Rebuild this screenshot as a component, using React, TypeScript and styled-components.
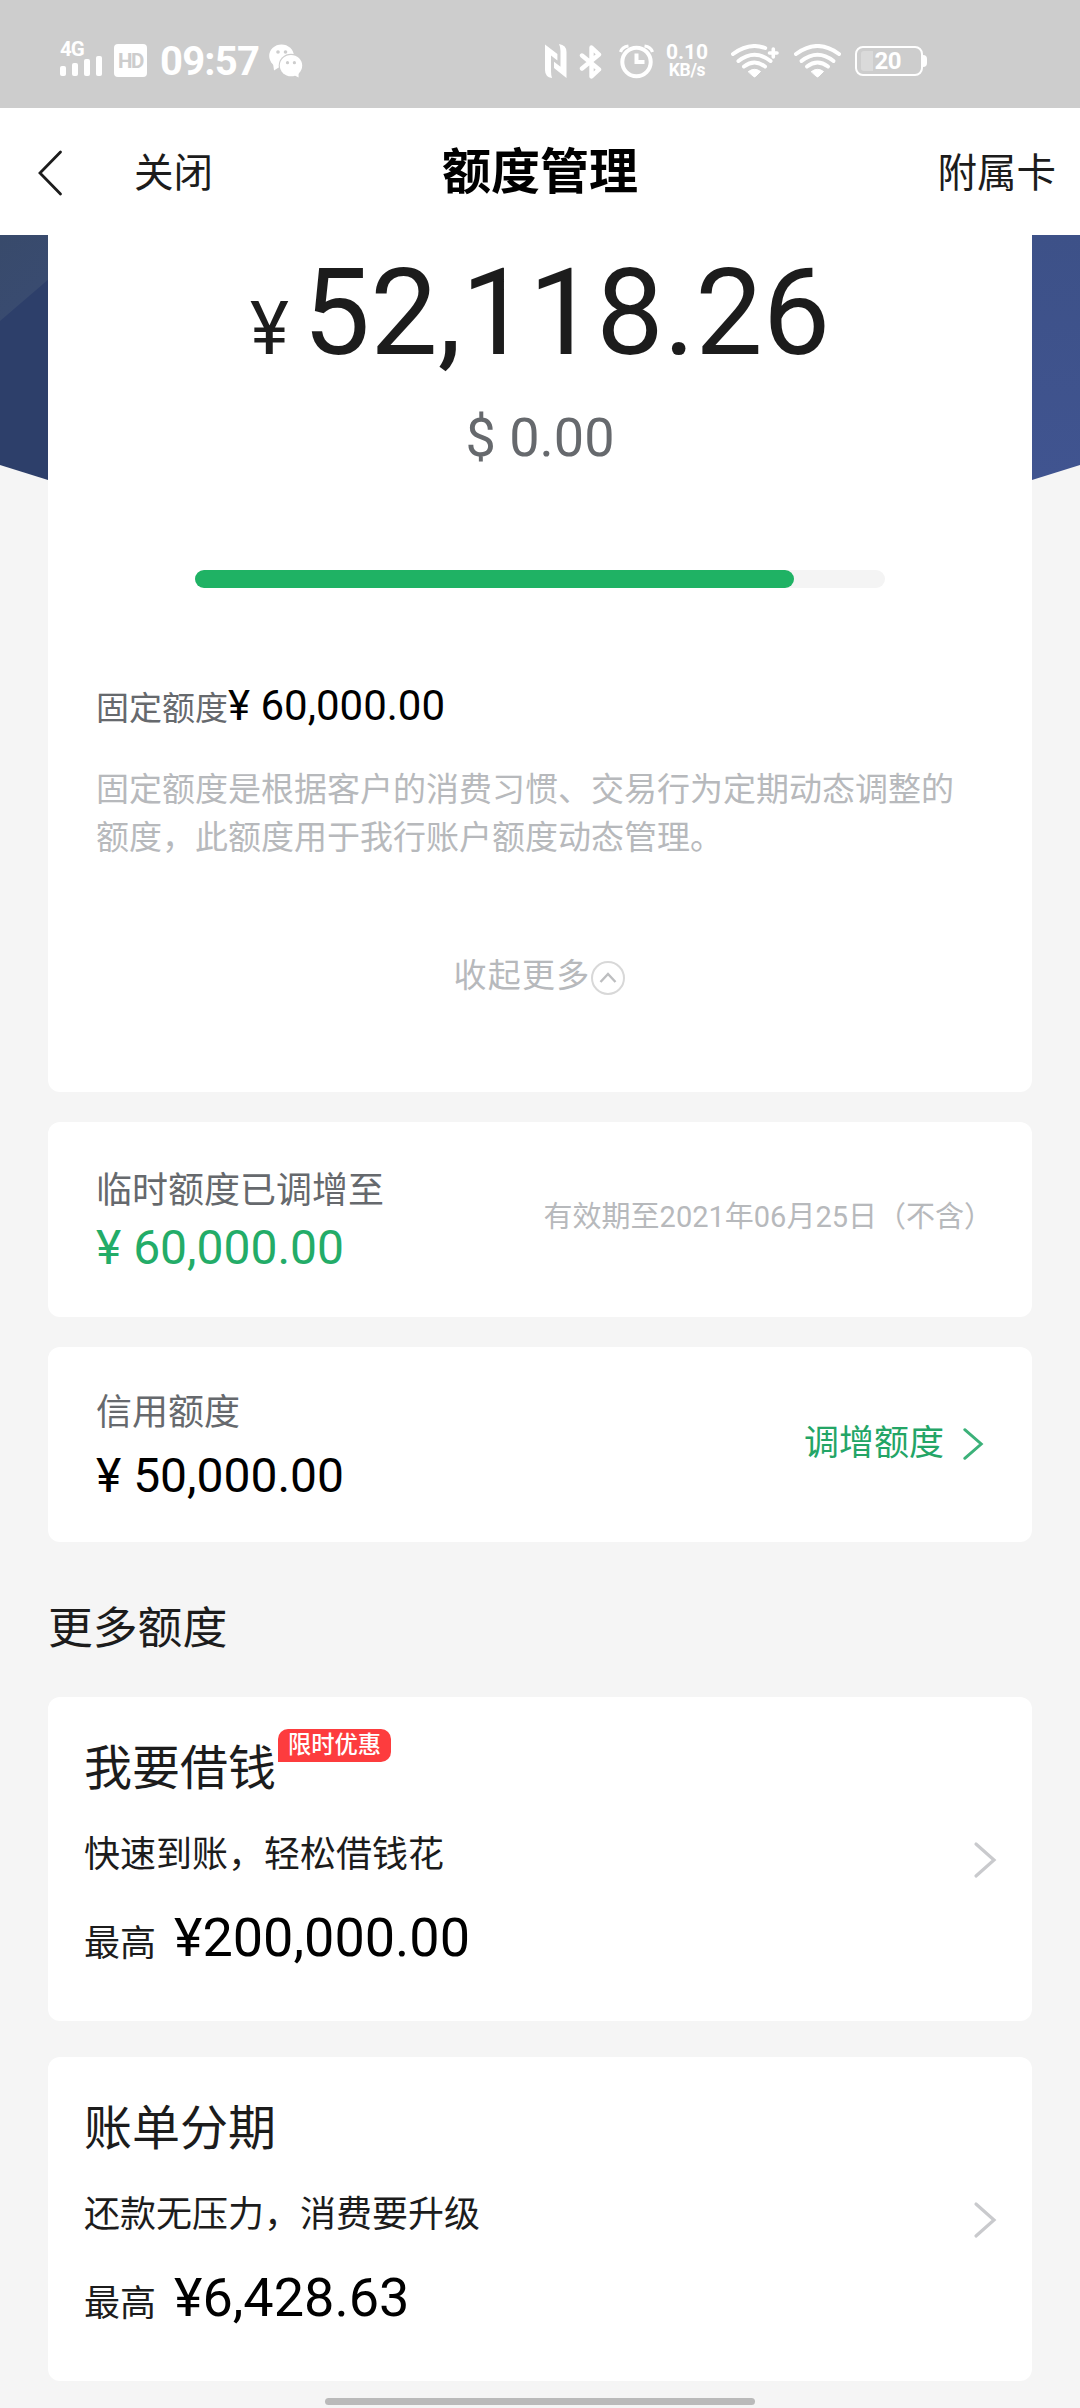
import React from "react";
import styled, { createGlobalStyle } from "styled-components";

const GlobalStyle = createGlobalStyle`
  *, *::before, *::after { box-sizing: border-box; }
  body {
    margin: 0;
    background: #f5f5f5;
    font-family: Roboto, "Noto Sans CJK SC", sans-serif;
    color: #1c1c1c;
  }
`;

const Screen = styled.div`
  width: 1080px;
  height: 2408px;
  display: flex;
  flex-direction: column;
  overflow: hidden;
  background: #f5f5f5;
`;

/* ---------- status bar ---------- */

const StatusBar = styled.header`
  height: 108px;
  flex: none;
  display: flex;
  align-items: flex-start;
  padding: 40px 153px 0 60px;
  background: #cdcdcd;
  color: #fff;
`;

const Network = styled.div`
  width: 43px;
  height: 36px;
  margin-right: 11px;
  display: flex;
  flex-direction: column;
  justify-content: space-between;
  font-size: 20.5px;
  font-weight: 700;
  line-height: 18px;
  letter-spacing: -1px;
`;

const Bars = styled.div`
  display: flex;
  align-items: flex-end;
  gap: 6px;
  height: 20px;
  margin-top: -2px;
`;

const Bar = styled.i<{ $h: number }>`
  width: 6px;
  height: ${(p) => p.$h}px;
  border-radius: 2px;
  background: #fff;
`;

const HdBadge = styled.div`
  width: 33px;
  height: 33px;
  margin: 4px 13px 0 0;
  border-radius: 4px;
  background: #fff;
  color: #cdcdcd;
  font-size: 20.5px;
  font-weight: 700;
  line-height: 34px;
  letter-spacing: -1.5px;
  text-align: center;
`;

const Clock = styled.div`
  width: 97px;
  margin-right: 12px;
  font-size: 40px;
  font-weight: 700;
  line-height: 44px;
  letter-spacing: -0.8px;
  white-space: nowrap;
`;

const StatusRight = styled.div`
  display: flex;
  margin-left: auto;
  padding-top: 4px;
`;

const Speed = styled.div`
  width: 40px;
  margin: -1px 24px 0 13px;
  display: flex;
  flex-direction: column;
  align-items: center;
  font-weight: 700;
  white-space: nowrap;
`;

const SpeedLine = styled.span<{ $size: number; $tight: number }>`
  font-size: ${(p) => p.$size}px;
  letter-spacing: ${(p) => p.$tight}px;
  line-height: 18px;
`;

const Battery = styled.div`
  width: 68px;
  height: 30px;
  margin: 2px 4px 0 14px;
  position: relative;
  border: 2px solid #fff;
  border-radius: 8px;
  display: flex;
  align-items: center;
  padding-left: 3.5px;
  font-size: 24px;
  font-weight: 700;
  line-height: 26px;
  gap: 2px;
  letter-spacing: -0.5px;

  &::before {
    content: "";
    width: 12px;
    height: 20px;
    border-radius: 3px 0 0 3px;
    background: #dadada;
  }

  &::after {
    content: "";
    position: absolute;
    right: -6px;
    top: 7px;
    width: 4px;
    height: 12px;
    border-radius: 0 4px 4px 0;
    background: #fff;
  }
`;

const Glyph = styled.svg<{ $gap?: number; $drop?: number }>`
  flex: none;
  display: block;
  margin-left: ${(p) => p.$gap ?? 0}px;
  margin-top: ${(p) => p.$drop ?? 0}px;
`;

/* ---------- navigation ---------- */

const NavBar = styled.nav`
  height: 127px;
  flex: none;
  display: grid;
  grid-template-columns: 1fr auto 1fr;
  align-items: center;
  padding: 2px 24px 0 36px;
  background: #fff;
`;

const NavLeft = styled.div`
  display: flex;
  align-items: center;
  gap: 69px;
`;

const NavText = styled.span<{ $end?: boolean }>`
  font-size: 39.5px;
  line-height: 60px;
  padding-top: 2px;
  text-align: ${(p) => (p.$end ? "right" : "left")};
`;

const Title = styled.h1`
  margin: 0;
  padding-right: 12px;
  font-size: 49px;
  font-weight: 700;
  line-height: 60px;
  color: #000;
`;

/* ---------- content ---------- */

const Content = styled.main`
  position: relative;
  flex: 1;
  min-height: 0;
  display: flex;
  flex-direction: column;
  padding: 0 48px;
`;

const Backdrop = styled.svg`
  position: absolute;
  top: 0;
  left: 0;
  display: block;
`;

const Card = styled.section`
  position: relative;
  flex: none;
  border-radius: 12px;
  background: #fff;
`;

const SummaryCard = styled(Card)`
  height: 857px;
  margin-bottom: 30px;
  padding: 8px 48px 0;
  border-radius: 0 0 12px 12px;
  display: flex;
  flex-direction: column;
`;

const Balance = styled.div`
  height: 140px;
  display: flex;
  justify-content: center;
  align-items: baseline;
  gap: 14px;
  font-size: 120px;
  line-height: 140px;
`;

const BalanceSign = styled.span`
  font-size: 74px;
  line-height: 1;
`;

const Dollar = styled.div`
  margin-top: 25px;
  text-align: center;
  font-size: 54px;
  line-height: 60px;
  color: #66696d;
`;

const Track = styled.div`
  width: 690px;
  height: 18px;
  margin: 102px auto 0;
  border-radius: 9px;
  background: #f4f4f4;
`;

const Fill = styled.div`
  height: 100%;
  border-radius: 9px;
  background: #1fb264;
`;

const FixedLimit = styled.div`
  height: 48px;
  margin-top: 94px;
  display: flex;
  align-items: baseline;
`;

const Label = styled.span<{ $size: number }>`
  font-size: ${(p) => p.$size}px;
  line-height: 48px;
  color: #66696d;
`;

const Money = styled.span<{ $size: number; $green?: boolean }>`
  font-size: ${(p) => p.$size}px;
  line-height: ${(p) => (p.$size < 48 ? 48 : p.$size > 50 ? 60 : 56)}px;
  color: ${(p) => (p.$green ? "#23ac68" : "#000")};
  white-space: nowrap;
`;

const Note = styled.p`
  margin: 36px 0 0;
  font-size: 33px;
  line-height: 48px;
  color: #b7b9bc;
`;

const Collapse = styled.button`
  margin: 90px 0 0;
  padding: 0;
  border: 0;
  background: none;
  display: flex;
  justify-content: center;
  align-items: center;
  height: 48px;
  font: inherit;
  font-size: 33px;
  line-height: 48px;
  letter-spacing: 1.2px;
  color: #b7b9bc;
`;

const LimitCard = styled(Card)`
  height: 195px;
  margin-bottom: 30px;
  padding: 3px 48px 0;
  display: flex;
  justify-content: space-between;
  align-items: center;
`;

const LimitInfo = styled.div<{ $gap: number }>`
  display: flex;
  flex-direction: column;
  gap: ${(p) => p.$gap}px;
`;

const Expiry = styled.span`
  margin: -9px -9px 0 0;
  font-size: 29px;
  line-height: 40px;
  color: #b7b9bc;
`;

const RaiseLink = styled.a`
  display: flex;
  align-items: center;
  gap: 18px;
  margin-top: -5px;
  font-size: 35px;
  line-height: 48px;
  color: #23a566;
`;

const SectionTitle = styled.h2`
  margin: 27px 0 38px;
  font-size: 44.8px;
  font-weight: 400;
  line-height: 60px;
`;

const OfferCard = styled(Card)`
  height: 324px;
  margin-bottom: 36px;
  padding: 42px 35px 0 36px;
  display: flex;
  justify-content: space-between;
`;

const OfferBody = styled.div`
  display: flex;
  flex-direction: column;
`;

const OfferHead = styled.div`
  display: flex;
  height: 60px;
  margin-bottom: 32px;
  font-size: 48px;
  line-height: 60px;
`;

const Tag = styled.span`
  height: 33px;
  width: 113px;
  margin: -10px 0 0 2px;
  border-radius: 10px 10px 10px 0;
  background: #fd3c3e;
  color: #fff;
  font-size: 23.3px;
  font-weight: 500;
  line-height: 33px;
  text-align: center;
`;

const OfferText = styled.span`
  font-size: 36px;
  line-height: 48px;
`;

const OfferAmount = styled.div`
  height: 60px;
  margin-top: 29px;
  display: flex;
  align-items: baseline;
  gap: 18px;
`;

const OfferArrow = styled.div`
  padding-top: 102px;
`;

const HomeBar = styled.div`
  position: absolute;
  left: 325px;
  bottom: 3px;
  width: 430px;
  height: 7px;
  border-radius: 4px;
  background: #bababa;
`;

/* ---------- drawings ---------- */

const WechatIcon = () => (
  <Glyph $drop={4} width="34" height="34" viewBox="0 0 34 34">
    <ellipse cx="12.5" cy="12" rx="12.3" ry="11.6" fill="#fff" />
    <path d="M4 19 L5 26.5 L12 22 Z" fill="#fff" />
    <ellipse cx="22" cy="21.6" rx="12.3" ry="11.8" fill="#cdcdcd" />
    <ellipse cx="22" cy="21.6" rx="11.2" ry="10.7" fill="#fff" />
    <path d="M23 30 L29.6 33.6 L29.5 27 Z" fill="#fff" />
    <g fill="#cdcdcd">
      <circle cx="9" cy="8" r="1.8" />
      <circle cx="16.5" cy="8" r="1.8" />
      <circle cx="18.5" cy="18.7" r="1.6" />
      <circle cx="25.4" cy="18.7" r="1.6" />
    </g>
  </Glyph>
);

const NfcIcon = () => (
  <Glyph width="22" height="34" viewBox="0 0 22 34" fill="#fff">
    <path d="M0 0.5 L12.4 10 V16.5 L6 11.5 V27 Q6 31 7 34 Q0 33 0 26 Z" />
    <path d="M21.5 34 L9 24 V17.8 L15.5 22.8 V7 Q15.5 3 14 0 Q21.5 1 21.5 8 Z" />
  </Glyph>
);

const BluetoothIcon = () => (
  <Glyph $gap={12} width="24" height="36" viewBox="0 0 24 36" fill="none" stroke="#fff" strokeWidth="4.4" strokeLinejoin="round" strokeLinecap="round">
    <path d="M3 11.5 L20 25.5 L12.5 32.5 V3.5 L20 10.5 L3 24.5" />
  </Glyph>
);

const AlarmIcon = () => (
  <Glyph $gap={16} width="35" height="35" viewBox="0 0 35 35" fill="none" stroke="#fff">
    <circle cx="17.5" cy="18" r="14.2" strokeWidth="4" />
    <path d="M17.5 9.5 V18 H25.5" strokeWidth="4" />
    <path d="M1.5 8 Q3 3 9.5 2" strokeWidth="3.2" />
    <path d="M33.5 8 Q32 3 25.5 2" strokeWidth="3.2" />
  </Glyph>
);

const WifiIcon = ({ plus }: { plus?: boolean }) => (
  <Glyph $gap={plus ? 0 : 14} width={plus ? 49 : 47} height="35" viewBox={plus ? "0 0 49 35" : "0 0 47 35"} fill="none" stroke="#fff" strokeLinecap="round">
    <path d={plus ? "M2 10 Q18.1 -2 34.2 4" : "M2 10 Q23.5 -6 45 10"} strokeWidth="4" />
    <path d="M7.5 17 Q23.5 4.5 39.5 17" strokeWidth="4" />
    <path d="M13 22.5 Q23.5 14.5 34 22.5" strokeWidth="4" />
    <path d="M17.5 27.5 Q23.5 23 29.5 27.5 L24.5 32.5 Q23.5 33.5 22.5 32.5 Z" fill="#fff" strokeWidth="1" />
    {plus && <path d="M38.5 9 H46 M42.3 5 V13" strokeWidth="3.6" />}
  </Glyph>
);

const BackIcon = () => (
  <Glyph width="29" height="48" viewBox="0 0 29 48" fill="none" stroke="#1c1c1c" strokeWidth="2.8" strokeLinecap="round">
    <path d="M24.5 3 L4 24 L24.5 45" />
  </Glyph>
);

const Chevron = ({ color, small }: { color: string; small?: boolean }) => (
  <Glyph width={small ? 22 : 24} height={small ? 34 : 38} viewBox="0 0 24 38" fill="none" stroke={color} strokeWidth="3.2" strokeLinecap="round" preserveAspectRatio="none">
    <path d="M3 3 L21 19 L3 35" />
  </Glyph>
);

const CollapseIcon = () => (
  <Glyph $drop={4} width="36" height="36" viewBox="0 0 36 36" fill="none">
    <circle cx="18" cy="18" r="16" stroke="#d8d8d8" strokeWidth="2" />
    <path d="M10.5 22 L18 14 L25.5 22" stroke="#bdbec0" strokeWidth="2.4" />
  </Glyph>
);

const BackdropArt = () => (
  <Backdrop width="1080" height="245" viewBox="0 0 1080 245">
    <defs>
      <linearGradient id="right" x1="0" y1="0" x2="0" y2="1">
        <stop offset="0" stopColor="#3d5188" />
        <stop offset="1" stopColor="#405490" />
      </linearGradient>
      <linearGradient id="facet" x1="0" y1="0" x2="1" y2="1">
        <stop offset="0" stopColor="#384a6b" />
        <stop offset="1" stopColor="#3a4c74" />
      </linearGradient>
    </defs>
    <path d="M0 0 H540 V245 H48 L0 230 Z" fill="#2d3f6a" />
    <path d="M0 0 H100 L0 86 Z" fill="url(#facet)" />
    <path d="M540 0 H1080 V230 L1032 245 H540 Z" fill="url(#right)" />
  </Backdrop>
);

/* ---------- screen ---------- */

type OfferProps = { title: string; tag?: string; text: string; amount: string };

const Offer = ({ title, tag, text, amount }: OfferProps) => (
  <OfferCard>
    <OfferBody>
      <OfferHead>
        {title}
        {tag && <Tag>{tag}</Tag>}
      </OfferHead>
      <OfferText>{text}</OfferText>
      <OfferAmount>
        <OfferText>最高</OfferText>
        <Money $size={54}>{amount}</Money>
      </OfferAmount>
    </OfferBody>
    <OfferArrow>
      <Chevron color="#c9cacd" />
    </OfferArrow>
  </OfferCard>
);

const TOTAL = 60000;
const AVAILABLE = 52118.26;

export default function App() {
  return (
    <Screen>
      <GlobalStyle />
      <StatusBar>
        <Network>
          4G
          <Bars>
            {[10, 13, 17, 20].map((h) => (
              <Bar key={h} $h={h} />
            ))}
          </Bars>
        </Network>
        <HdBadge>HD</HdBadge>
        <Clock>09:57</Clock>
        <WechatIcon />
        <StatusRight>
          <NfcIcon />
          <BluetoothIcon />
          <AlarmIcon />
          <Speed>
            <SpeedLine $size={21} $tight={0}>0.10</SpeedLine>
            <SpeedLine $size={17.5} $tight={-0.3}>KB/s</SpeedLine>
          </Speed>
          <WifiIcon plus />
          <WifiIcon />
          <Battery>20</Battery>
        </StatusRight>
      </StatusBar>

      <NavBar>
        <NavLeft>
          <BackIcon />
          <NavText>关闭</NavText>
        </NavLeft>
        <Title>额度管理</Title>
        <NavText $end>附属卡</NavText>
      </NavBar>

      <Content>
        <BackdropArt />
        <SummaryCard>
          <Balance>
            <BalanceSign>¥</BalanceSign>
            <span>52,118.26</span>
          </Balance>
          <Dollar>$ 0.00</Dollar>
          <Track>
            <Fill style={{ width: `${(AVAILABLE / TOTAL) * 100}%` }} />
          </Track>
          <FixedLimit>
            <Label $size={33}>固定额度</Label>
            <Money $size={42}>¥ 60,000.00</Money>
          </FixedLimit>
          <Note>固定额度是根据客户的消费习惯、交易行为定期动态调整的额度，此额度用于我行账户额度动态管理。</Note>
          <Collapse>
            收起更多
            <CollapseIcon />
          </Collapse>
        </SummaryCard>

        <LimitCard>
          <LimitInfo $gap={5}>
            <Label $size={36}>临时额度已调增至</Label>
            <Money $size={48} $green>¥ 60,000.00</Money>
          </LimitInfo>
          <Expiry>有效期至2021年06月25日（不含）</Expiry>
        </LimitCard>

        <LimitCard>
          <LimitInfo $gap={11}>
            <Label $size={36}>信用额度</Label>
            <Money $size={48}>¥ 50,000.00</Money>
          </LimitInfo>
          <RaiseLink>
            调增额度
            <Chevron color="#3cb179" small />
          </RaiseLink>
        </LimitCard>

        <SectionTitle>更多额度</SectionTitle>
        <Offer title="我要借钱" tag="限时优惠" text="快速到账，轻松借钱花" amount="¥200,000.00" />
        <Offer title="账单分期" text="还款无压力，消费要升级" amount="¥6,428.63" />
        <HomeBar />
      </Content>
    </Screen>
  );
}
